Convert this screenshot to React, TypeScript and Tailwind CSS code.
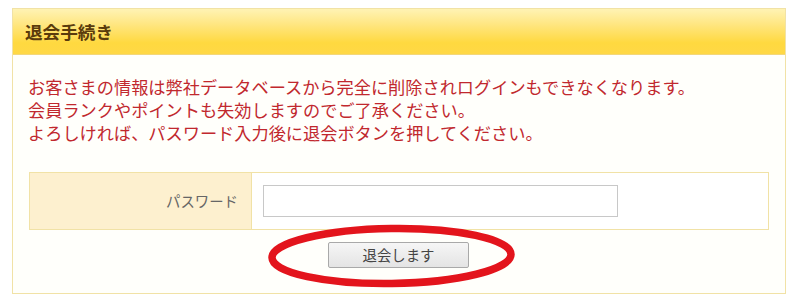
import React from "react";

export default function App() {
  return (
    <div
      className="w-[800px] h-[300px] bg-white relative overflow-hidden"
      style={{ fontFamily: '"Noto Sans CJK JP", "Noto Sans", sans-serif' }}
    >
      <div className="absolute left-0 top-0 w-full h-full pt-[8px] pl-[12px]">
        <div className="w-[774px] border border-[#f1e2a6] bg-[#fffffb]">
          <div className="h-[46px] flex items-center pl-[12px] bg-[linear-gradient(to_bottom,#fff3b4_0%,#ffe680_35%,#ffd940_75%,#ffd845_100%)] border-b border-[#f3d77a]">
            <span className="text-[17.6px] font-bold text-[#5a3b0c] leading-none">退会手続き</span>
          </div>
          <div className="pt-[20px] pl-[15px] pr-[16px] pb-[25px]">
            <div className="text-[17.2px] leading-[23px] text-[#c1282e]">
              <p>お客さまの情報は弊社データベースから完全に削除されログインもできなくなります。</p>
              <p>会員ランクやポイントも失効しますのでご了承ください。</p>
              <p>よろしければ、パスワード入力後に退会ボタンを押してください。</p>
            </div>
            <div className="mt-[28px] ml-[1px] w-[740px] h-[58px] flex border border-[#f1e2a6]">
              <div className="w-[222px] bg-[#fdf0cf] border-r border-[#f1e2a6] flex items-center justify-end pr-[13px]">
                <span className="text-[14.4px] text-[#666]">パスワード</span>
              </div>
              <div className="flex-1 bg-white flex items-center pl-[11px]">
                <div className="w-[355px] h-[32px] border border-[#c8c8c8] bg-white" />
              </div>
            </div>
            <div className="flex justify-center mt-[12px]">
              <button className="w-[141px] h-[26px] border border-[#a9a9a9] rounded-[2px] bg-[linear-gradient(to_bottom,#f6f6f6,#e4e4e4)] text-[14.4px] text-[#444] flex items-center justify-center">
                退会します
              </button>
            </div>
          </div>
        </div>
      </div>
      <svg className="absolute left-0 top-0" width="800" height="300" viewBox="0 0 800 300">
        <ellipse
          cx="391.5"
          cy="256"
          rx="119.5"
          ry="27.5"
          fill="none"
          stroke="#e3141c"
          strokeWidth="7.5"
          transform="rotate(-0.8 391.5 256)"
        />
      </svg>
    </div>
  );
}
